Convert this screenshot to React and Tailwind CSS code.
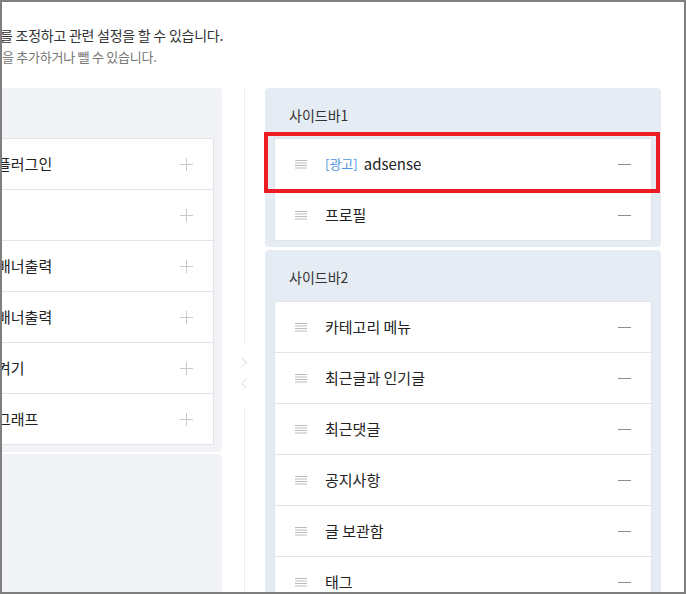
import React from 'react';

const font = { fontFamily: '"Noto Sans CJK KR", "Noto Sans", sans-serif' };

const Plus = () => (
  <svg width="13" height="13" viewBox="0 0 13 13" className="shrink-0">
    <path d="M0 6.5H13M6.5 0V13" stroke="#c9c9c9" strokeWidth="1" />
  </svg>
);

const Minus = () => (
  <svg width="13" height="3" viewBox="0 0 13 3" className="shrink-0">
    <path d="M0 1.5H13" stroke="#8a8f97" strokeWidth="1" />
  </svg>
);

const Grip = () => (
  <svg width="12" height="9" viewBox="0 0 12 9" className="shrink-0">
    <path d="M0 0.5H12M0 3H12M0 5.5H12M0 8H12" stroke="#b4b4b4" strokeWidth="0.9" />
  </svg>
);

const leftItems = ['플러그인', '', '배너출력', '배너출력', '켜기', '그래프'];
const sidebar1 = [{ tag: '[광고]', name: 'adsense' }, { name: '프로필' }];
const sidebar2 = ['카테고리 메뉴', '최근글과 인기글', '최근댓글', '공지사항', '글 보관함', '태그', '방문자수'];

const ModuleRow = ({ item }) => (
  <div className="h-[51px] flex items-center pl-[20px] pr-[20px] border-t border-[#e1e5ea]">
    <Grip />
    <div className="ml-[18px] flex-1 flex items-center text-[15px] text-[#222]">
      {item.tag && <span className="text-[13px] text-[#4b95dd] mr-[6px]">{item.tag}</span>}
      <span>{item.name}</span>
    </div>
    <Minus />
  </div>
);

const App = () => {
  return (
    <div className="w-[686px] h-[594px] border-2 border-[#7f7f7f] bg-white overflow-hidden" style={font}>
      <div className="pt-[23px] tracking-[-0.25px]">
        <p className="text-[14px] leading-[20px] text-[#333] whitespace-nowrap -ml-[2px]">를 조정하고 관련 설정을 할 수 있습니다.</p>
        <p className="mt-[2px] text-[13px] leading-[20px] text-[#777] whitespace-nowrap">을 추가하거나 뺄 수 있습니다.</p>
      </div>

      <div className="mt-[21px] flex items-stretch h-[504px]">
        {/* available modules */}
        <div className="w-[270px] -ml-[50px] shrink-0 flex flex-col">
          <div className="bg-[#f1f3f6] pt-[50px] pl-[8px] pr-[8px] pb-[7px] rounded-r-sm">
            <div className="bg-white border-x border-b border-[#e1e4e9]">
              {leftItems.map((t, i) => (
                <div
                  key={i}
                  className="h-[51px] flex items-center pl-[36px] pr-[20px] text-[15px] text-[#222] border-t border-[#e1e4e9]"
                >
                  <span className="flex-1 whitespace-nowrap">{t}</span>
                  <Plus />
                </div>
              ))}
            </div>
          </div>
          <div className="mt-[2px] flex-1 bg-[#f1f3f6] rounded-tr-sm" />
        </div>

        {/* divider */}
        <div className="w-[43px] shrink-0 flex flex-col pl-[22px]">
          <div className="w-px h-[257px] bg-[#eceef1]" />
          <div className="h-[62px] flex flex-col -ml-[4px]">
            <svg width="9" height="11" viewBox="0 0 9 11" className="mt-[12px]">
              <polyline points="1.5,1 6.5,5.5 1.5,10" fill="none" stroke="#d7dadf" strokeWidth="1" />
            </svg>
            <svg width="9" height="11" viewBox="0 0 9 11" className="mt-[10px]">
              <polyline points="6.5,1 1.5,5.5 6.5,10" fill="none" stroke="#d7dadf" strokeWidth="1" />
            </svg>
          </div>
          <div className="w-px flex-1 bg-[#eceef1]" />
        </div>

        {/* sidebar modules */}
        <div className="w-[396px] shrink-0 flex flex-col">
          <div className="bg-[#e6ecf3] rounded-sm pb-[6px]">
            <div className="h-[50px] pt-[17px] pl-[24px] text-[14px] leading-[20px] text-[#333]">사이드바1</div>
            <div className="relative mx-[9px] bg-white border-x border-b border-[#dde3ea]">
              {sidebar1.map((item, i) => (
                <ModuleRow key={i} item={item} />
              ))}
              <div className="absolute -left-[11px] -top-[6px] w-[396px] h-[61px] border-4 border-[#ec1c24]" />
            </div>
          </div>
          <div className="mt-[3px] flex-1 bg-[#e6ecf3] rounded-t-sm overflow-hidden">
            <div className="h-[51px] pt-[17px] pl-[24px] text-[14px] leading-[20px] text-[#333]">사이드바2</div>
            <div className="mx-[9px] bg-white border-x border-b border-[#dde3ea]">
              {sidebar2.map((name, i) => (
                <ModuleRow key={i} item={{ name }} />
              ))}
            </div>
          </div>
        </div>
      </div>
    </div>
  );
};

export default App;
